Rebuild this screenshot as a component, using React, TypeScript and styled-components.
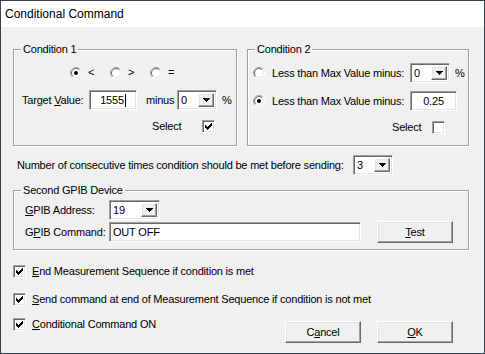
import React from 'react';
import styled, { createGlobalStyle, css } from 'styled-components';

const Global = createGlobalStyle`
  html, body { margin: 0; padding: 0; background: #ffffff; }
  body { font-family: "Liberation Sans", Arial, sans-serif; font-size: 11px; letter-spacing: -0.2px; color: #000; }
  * { box-sizing: border-box; }
`;

const sunken = css`
  border-style: solid;
  border-width: 1px;
  border-color: #a0a0a0 #ffffff #ffffff #a0a0a0;
  box-shadow: inset 1px 1px 0 #696969, inset -1px -1px 0 #e3e3e3;
`;

const raised = css`
  border-style: solid;
  border-width: 1px;
  border-color: #ffffff #696969 #696969 #ffffff;
  box-shadow: inset -1px -1px 0 #a0a0a0, inset 1px 1px 0 #e3e3e3;
  background: #f0f0f0;
`;

const Window = styled.div`
  width: 485px;
  height: 354px;
  border: 1px solid #34404e;
  background: #f0f0f0;
  display: flex;
  flex-direction: column;
`;

const TitleBar = styled.div`
  height: 26px;
  flex: none;
  background: #ffffff;
  display: flex;
  align-items: center;
  padding-left: 4px;
  font-size: 12px;
  letter-spacing: 0;
  color: #000;
`;

const Body = styled.div`
  flex: 1;
  display: flex;
  flex-direction: column;
  padding: 0 15px 0 12px;
`;

const GroupsRow = styled.div`
  display: flex;
  gap: 10px;
  margin-top: 16px;
`;

const Group = styled.fieldset<{ $w?: number; $grow?: boolean; $mt?: number; $pb?: number }>`
  margin: ${p => p.$mt ?? 0}px 0 0 0;
  padding: 0 0 ${p => p.$pb ?? 11}px 0;
  min-width: 0;
  flex: ${p => (p.$grow ? '1 1 0' : 'none')};
  ${p => (p.$w ? `width: ${p.$w}px;` : '')}
  border: 1px solid #a0a0a0;
  box-shadow: inset 1px 1px 0 #ffffff, 1px 1px 0 #ffffff;
  display: flex;
  flex-direction: column;
`;

const Legend = styled.legend`
  margin-left: 7px;
  padding: 0 2px;
  height: 13px;
  line-height: 13px;
  background: #f0f0f0;
`;

const Row = styled.div<{ $mt: number; $pl?: number; $h?: number; $gap?: number }>`
  display: flex;
  align-items: center;
  margin-top: ${p => p.$mt}px;
  padding-left: ${p => p.$pl ?? 0}px;
  height: ${p => p.$h ?? 20}px;
  gap: ${p => p.$gap ?? 0}px;
`;

const Label = styled.span<{ $w?: number; $ml?: number }>`
  display: inline-block;
  white-space: nowrap;
  line-height: 13px;
  ${p => (p.$w ? `width: ${p.$w}px; flex: none;` : '')}
  margin-left: ${p => p.$ml ?? 0}px;
`;

const U = styled.span`
  text-decoration: underline;
  text-underline-offset: 1px;
`;

const RadioOption = styled.span`
  display: inline-flex;
  align-items: center;
  width: 40px;
  gap: 6px;
`;

const TextBox = styled.div<{ $w: number; $align?: string }>`
  ${sunken};
  width: ${p => p.$w}px;
  height: 20px;
  flex: none;
  background: #ffffff;
  display: flex;
  align-items: center;
  justify-content: ${p => p.$align ?? 'center'};
  padding: 0 3px;
  line-height: 13px;
`;

const Caret = styled.span`
  display: inline-block;
  width: 1px;
  height: 13px;
  background: #000;
  margin-left: 1px;
`;

const Combo = styled.div<{ $w: number }>`
  ${sunken};
  width: ${p => p.$w}px;
  height: 20px;
  flex: none;
  background: #ffffff;
  display: flex;
  align-items: stretch;
  padding: 2px;
`;

const ComboValue = styled.span`
  flex: 1;
  display: flex;
  align-items: center;
  padding-left: 1px;
  line-height: 13px;
`;

const DropButton = styled.span`
  ${raised};
  width: 16px;
  flex: none;
  display: flex;
  align-items: center;
  justify-content: center;
`;

const PushButton = styled.div<{ $w: number; $h: number; $ml?: number }>`
  ${raised};
  width: ${p => p.$w}px;
  height: ${p => p.$h}px;
  margin-left: ${p => p.$ml ?? 0}px;
  flex: none;
  display: flex;
  align-items: center;
  justify-content: center;
  line-height: 13px;
`;

const BoxStyle = styled.span`
  ${sunken};
  width: 13px;
  height: 13px;
  flex: none;
  background: #ffffff;
  display: inline-block;
  position: relative;
`;

const CheckRow = styled.div<{ $mt: number }>`
  display: flex;
  align-items: center;
  height: 13px;
  margin-top: ${p => p.$mt}px;
  gap: 6px;
`;

const BottomRow = styled.div`
  display: flex;
  align-items: flex-start;
  margin-top: 12px;
`;

const Buttons = styled.div`
  margin-left: auto;
  margin-right: 16px;
  margin-top: 3px;
  display: flex;
  gap: 16px;
`;

const Arrow = () => (
  <svg width="7" height="4" viewBox="0 0 7 4" shapeRendering="crispEdges">
    <polygon points="0,0 7,0 3.5,4" fill="#000" />
  </svg>
);

const Check = () => (
  <svg width="13" height="13" viewBox="0 0 13 13" style={{ position: 'absolute', left: -1, top: -1 }} shapeRendering="crispEdges">
    {[[3, 5], [4, 6], [5, 7], [6, 6], [7, 5], [8, 4], [9, 3]].map(([x, y]) => (
      <rect key={x} x={x} y={y} width={1} height={3} fill="#000" />
    ))}
  </svg>
);

const CheckBox = ({ checked }: { checked?: boolean }) => <BoxStyle>{checked && <Check />}</BoxStyle>;

const Radio = ({ checked }: { checked?: boolean }) => {
  const arc = (r: number, tl: boolean) => {
    const d = r * Math.SQRT1_2;
    return tl
      ? `M ${6 - d} ${6 + d} A ${r} ${r} 0 0 1 ${6 + d} ${6 - d}`
      : `M ${6 + d} ${6 - d} A ${r} ${r} 0 0 1 ${6 - d} ${6 + d}`;
  };
  return (
    <svg width="12" height="12" viewBox="0 0 12 12" style={{ flex: 'none' }}>
      <circle cx="6" cy="6" r="5.5" fill="#ffffff" />
      <path d={arc(5.5, true)} stroke="#a0a0a0" fill="none" strokeWidth="1" />
      <path d={arc(5.5, false)} stroke="#ffffff" fill="none" strokeWidth="1" />
      <path d={arc(4.5, true)} stroke="#696969" fill="none" strokeWidth="1" />
      <path d={arc(4.5, false)} stroke="#e3e3e3" fill="none" strokeWidth="1" />
      {checked && <circle cx="6" cy="6" r="2" fill="#000" />}
    </svg>
  );
};

const ComboBox = ({ w, value }: { w: number; value: string }) => (
  <Combo $w={w}>
    <ComboValue>{value}</ComboValue>
    <DropButton>
      <Arrow />
    </DropButton>
  </Combo>
);

export default function App() {
  return (
    <>
      <Global />
      <Window>
        <TitleBar>Conditional Command</TitleBar>
        <Body>
          <GroupsRow>
            <Group $w={224}>
              <Legend>Condition 1</Legend>
              <Row $mt={10} $pl={56} $h={13}>
                <RadioOption>
                  <Radio checked />
                  <Label>&lt;</Label>
                </RadioOption>
                <RadioOption>
                  <Radio />
                  <Label>&gt;</Label>
                </RadioOption>
                <RadioOption>
                  <Radio />
                  <Label>=</Label>
                </RadioOption>
              </Row>
              <Row $mt={11} $pl={8}>
                <Label $w={67}>
                  Target <U>V</U>alue:
                </Label>
                <TextBox $w={48}>
                  1555
                  <Caret />
                </TextBox>
                <Label $w={31} $ml={9}>
                  minus
                </Label>
                <ComboBox w={40} value="0" />
                <Label $ml={5}>%</Label>
              </Row>
              <Row $mt={10} $pl={138} $h={13} $gap={21}>
                <Label>Select</Label>
                <CheckBox checked />
              </Row>
            </Group>
            <Group $grow>
              <Legend>Condition 2</Legend>
              <Row $mt={7} $pl={5}>
                <Radio />
                <Label $w={138} $ml={7}>
                  Less than Max Value minus:
                </Label>
                <ComboBox w={40} value="0" />
                <Label $ml={5}>%</Label>
              </Row>
              <Row $mt={8} $pl={5}>
                <Radio checked />
                <Label $w={138} $ml={7}>
                  Less than Max Value minus:
                </Label>
                <TextBox $w={47}>0.25</TextBox>
              </Row>
              <Row $mt={10} $pl={144} $h={13} $gap={11}>
                <Label>Select</Label>
                <CheckBox />
              </Row>
            </Group>
          </GroupsRow>
          <Row $mt={9} $pl={4}>
            <Label $w={336}>Number of consecutive times condition should be met before sending:</Label>
            <ComboBox w={40} value="3" />
          </Row>
          <Group $mt={9} $pb={6}>
            <Legend>Second GPIB Device</Legend>
            <Row $mt={3} $pl={11}>
              <Label $w={84}>
                <U>G</U>PIB Address:
              </Label>
              <ComboBox w={51} value="19" />
            </Row>
            <Row $mt={1} $pl={11} $h={22}>
              <Label $w={84}>
                G<U>P</U>IB Command:
              </Label>
              <TextBox $w={252} $align="flex-start">
                OUT OFF
              </TextBox>
              <PushButton $w={76} $h={22} $ml={16}>
                <span>
                  <U>T</U>est
                </span>
              </PushButton>
            </Row>
          </Group>
          <CheckRow $mt={15}>
            <CheckBox checked />
            <Label>
              <U>E</U>nd Measurement Sequence if condition is met
            </Label>
          </CheckRow>
          <CheckRow $mt={15}>
            <CheckBox checked />
            <Label>
              <U>S</U>end command at end of Measurement Sequence if condition is not met
            </Label>
          </CheckRow>
          <BottomRow>
            <CheckRow $mt={0}>
              <CheckBox checked />
              <Label>
                <U>C</U>onditional Command ON
              </Label>
            </CheckRow>
            <Buttons>
              <PushButton $w={76} $h={22}>
                <span>
                  C<U>a</U>ncel
                </span>
              </PushButton>
              <PushButton $w={76} $h={22}>
                <span>
                  <U>O</U>K
                </span>
              </PushButton>
            </Buttons>
          </BottomRow>
        </Body>
      </Window>
    </>
  );
}
